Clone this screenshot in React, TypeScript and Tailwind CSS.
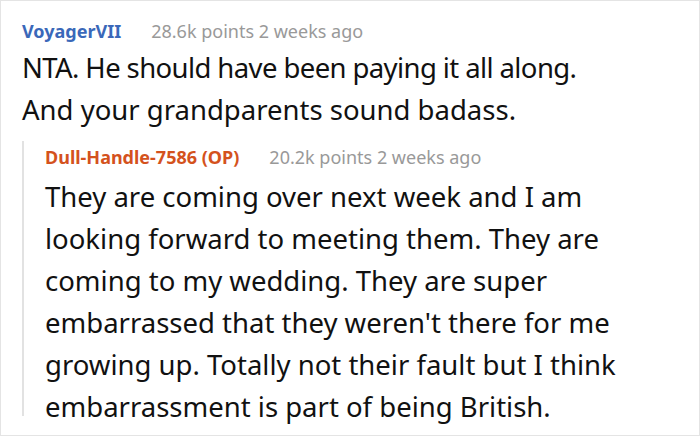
export default function App() {
  return (
    <div
      className="w-[700px] h-[436px] overflow-hidden border border-[#e4e4e4] bg-white pl-[21px] pt-[14px]"
      style={{ fontFamily: '"Noto Sans", sans-serif' }}
    >
      {/* top-level comment */}
      <div className="flex items-baseline gap-[30px] text-[18px] leading-[32px]">
        <span className="font-bold text-[#3a68b9]">VoyagerVII</span>
        <span className="text-[#999999]">28.6k points 2 weeks ago</span>
      </div>
      <p className="text-[27.5px] leading-[42px] text-[#111111]">
        <span className="tracking-[-0.6px]">NTA. He should have been paying it all along.</span>
        <br />
        And your grandparents sound badass.
      </p>

      {/* reply */}
      <div className="mt-[10px] flex">
        <div className="w-[2px] shrink-0 bg-[#e2e2e2] mb-[12px]" />
        <div className="pl-[21px]">
          <div className="mb-[3px] flex items-baseline gap-[30px] text-[18px] leading-[32px]">
            <span className="font-bold text-[#d4521d]">Dull-Handle-7586 (OP)</span>
            <span className="text-[#999999]">20.2k points 2 weeks ago</span>
          </div>
          <p className="w-[590px] text-[27.5px] leading-[42px] text-[#111111]">
            They are coming over next week and I am looking forward to meeting them. They are
            coming to my wedding. They are super embarrassed that they weren't there for me
            growing up. Totally not their fault but I think embarrassment is part of being British.
          </p>
        </div>
      </div>
    </div>
  );
}
